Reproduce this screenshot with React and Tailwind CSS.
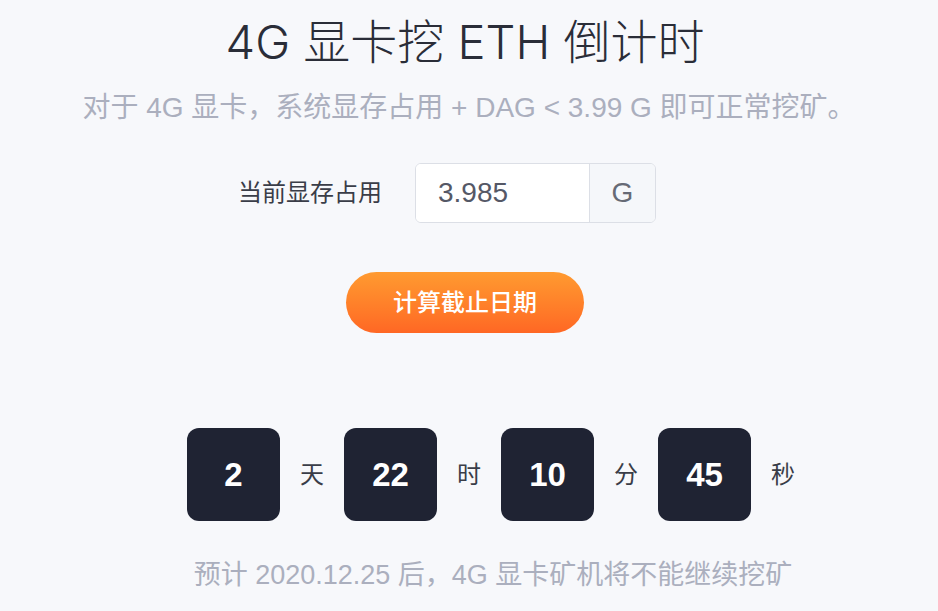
import React, { useState } from "react";

const font = { fontFamily: '"Liberation Sans", "Noto Sans CJK SC", sans-serif' };
const titleFont = { fontFamily: 'Inter, "Noto Sans CJK SC", sans-serif' };

const units = [
  { value: "2", label: "天" },
  { value: "22", label: "时" },
  { value: "10", label: "分" },
  { value: "45", label: "秒" },
];

const App = () => {
  const [memory, setMemory] = useState("3.985");

  return (
    <div
      className="min-h-[611px] w-full bg-[#f7f8fb] flex flex-col items-center"
      style={font}
    >
      <h1
        className="mt-[10px] mr-[8px] text-[47px] leading-[64px] font-light text-[#2a2d38]"
        style={titleFont}
      >
        4G 显卡挖 ETH 倒计时
      </h1>
      <p className="mt-[16px] text-[28px] leading-[36px] text-[#abafbe]">
        对于 4G 显卡，系统显存占用 + DAG &lt; 3.99 G 即可正常挖矿。
      </p>

      <div className="mt-[37px] flex items-center pr-[44px]">
        <label className="text-[24px] text-[#3a3d48]">当前显存占用</label>
        <div className="ml-[33px] flex h-[60px] rounded-[6px] border border-[#dcdfe6] bg-white overflow-hidden">
          <input
            type="text"
            value={memory}
            onChange={(e) => setMemory(e.target.value)}
            className="w-[173px] px-[22px] text-[28px] text-[#555866] outline-none bg-white"
            style={font}
          />
          <div className="w-[66px] border-l border-[#dcdfe6] bg-[#f5f7fa] flex items-center justify-center text-[28px] text-[#666a75]">
            G
          </div>
        </div>
      </div>

      <button className="mt-[49px] mr-[8px] h-[61px] w-[238px] rounded-full bg-gradient-to-b from-[#ff9a30] to-[#ff6724] text-white text-[24px] font-medium">
        计算截止日期
      </button>

      <div className="mt-[95px] flex items-center pl-[64px]">
        {units.map((u) => (
          <div key={u.label} className="flex items-center">
            <div className="w-[93px] h-[93px] rounded-[12px] bg-[#1f2333] flex items-center justify-center text-white text-[33px] font-bold">
              {u.value}
            </div>
            <span className="mx-[20px] text-[24px] text-[#3a3d48]">{u.label}</span>
          </div>
        ))}
      </div>

      <p className="mt-[36px] pl-[48px] text-[27px] leading-[36px] text-[#abafbe]">
        预计 2020.12.25 后，4G 显卡矿机将不能继续挖矿
      </p>
    </div>
  );
};

export default App;
